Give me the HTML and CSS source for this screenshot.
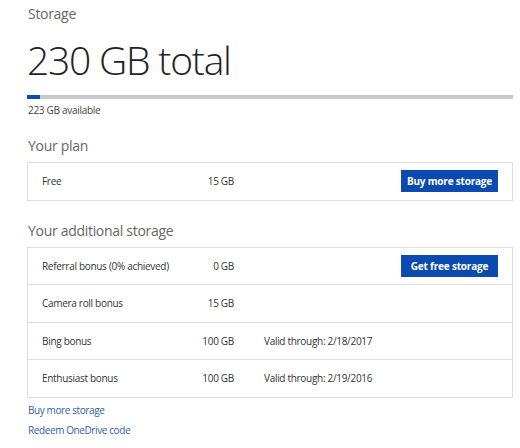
FILE: index.html
```html
<!DOCTYPE html>
<html>
<head>
<meta charset="utf-8">
<link rel="stylesheet" href="styles.css">
</head>
<body>
<div class="page">
  <div class="crumb">Storage</div>
  <div class="total">230 GB total</div>
  <div class="bar"><div class="bar-fill" style="width:13px"></div></div>
  <div class="avail">223 GB available</div>

  <div class="section-title">Your plan</div>
  <div class="card">
    <div class="row">
      <span class="name">Free</span>
      <span class="amount">15 GB</span>
      <span class="valid"></span>
      <button class="btn">Buy more storage</button>
    </div>
  </div>

  <div class="section-title second">Your additional storage</div>
  <div class="card">
    <div class="row">
      <span class="name">Referral bonus (0% achieved)</span>
      <span class="amount">0 GB</span>
      <span class="valid"></span>
      <button class="btn">Get free storage</button>
    </div>
    <div class="row">
      <span class="name">Camera roll bonus</span>
      <span class="amount">15 GB</span>
      <span class="valid"></span>
    </div>
    <div class="row">
      <span class="name">Bing bonus</span>
      <span class="amount">100 GB</span>
      <span class="valid">Valid through: 2/18/2017</span>
    </div>
    <div class="row">
      <span class="name">Enthusiast bonus</span>
      <span class="amount">100 GB</span>
      <span class="valid">Valid through: 2/19/2016</span>
    </div>
  </div>

  <div class="links">
    <a class="link" href="#">Buy more storage</a>
    <a class="link" href="#">Redeem OneDrive code</a>
  </div>
</div>
</body>
</html>
```

FILE: styles.css
```css
html, body {
  margin: 0;
  padding: 0;
  background: #fff;
}
body {
  font-family: "Open Sans", Lato, sans-serif;
  color: #333;
}
.page {
  padding: 4px 7px 0 27px;
}
.crumb {
  font-size: 14px;
  line-height: 20px;
  letter-spacing: -0.3px;
  color: #666;
  padding-left: 1px;
}
.total {
  font-size: 39px;
  font-weight: 300;
  letter-spacing: -1.2px;
  line-height: 50px;
  margin-top: 11px;
  color: #222;
}
.bar {
  height: 4px;
  background: #c8c8c8;
  margin-top: 10px;
}
.bar-fill {
  height: 4px;
  background: #0b4aaf;
}
.avail {
  font-size: 10px;
  line-height: 14px;
  letter-spacing: -0.3px;
  margin-top: 4px;
  color: #444;
  padding-left: 1px;
}
.section-title {
  font-size: 14px;
  line-height: 20px;
  letter-spacing: -0.3px;
  color: #666;
  margin-top: 19px;
  margin-bottom: 6px;
  padding-left: 1px;
}
.section-title.second {
  margin-top: 20px;
}
.card {
  border: 1px solid #ddd;
}
.row {
  display: grid;
  grid-template-columns: 151px 41px 1fr auto;
  align-items: center;
  height: 36.5px;
  padding: 0 14px 0 14px;
  font-size: 10px;
  letter-spacing: -0.3px;
}
.row + .row {
  border-top: 1px solid #ddd;
}
.amount {
  text-align: right;
}
.valid {
  padding-left: 30px;
}
.btn {
  font-family: inherit;
  font-size: 10px;
  font-weight: 700;
  letter-spacing: -0.2px;
  color: #fff;
  background: #0b4aaf;
  border: none;
  width: 97px;
  height: 22px;
  padding: 0;
}
.links {
  display: flex;
  flex-direction: column;
  gap: 6px;
  margin-top: 5px;
  padding-left: 1px;
}
.link {
  font-size: 10px;
  line-height: 14px;
  letter-spacing: -0.4px;
  color: #2f5ea8;
  text-decoration: none;
}
```
